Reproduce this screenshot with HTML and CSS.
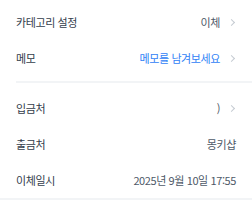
FILE: index.html
```html
<!DOCTYPE html>
<html lang="ko">
<head>
<meta charset="utf-8">
<link rel="stylesheet" href="styles.css">
</head>
<body>
<div class="page">
  <div class="section">
    <div class="row"><span class="label">카테고리 설정</span><span class="value">이체<span class="chev"></span></span></div>
    <div class="row"><span class="label">메모</span><span class="value blue">메모를 남겨보세요<span class="chev"></span></span></div>
  </div>
  <div class="divider"></div>
  <div class="section">
    <div class="row"><span class="label">입금처</span><span class="value">)<span class="chev"></span></span></div>
    <div class="row"><span class="label">출금처</span><span class="value">몽키샵</span></div>
    <div class="row"><span class="label">이체일시</span><span class="value">2025년 9월 10일 17:55</span></div>
  </div>
  <div class="bottom"></div>
</div>
</body>
</html>
```
FILE: styles.css
```css
html, body {
  margin: 0;
  padding: 0;
  background: #ffffff;
}
.page {
  width: 252px;
  height: 200px;
  display: flex;
  flex-direction: column;
  padding-top: 4px;
  box-sizing: border-box;
  font-family: "Noto Sans CJK KR", "Noto Sans", sans-serif;
  font-size: 11px;
  letter-spacing: -0.4px;
}
.section {
  display: flex;
  flex-direction: column;
}
.row {
  height: 36px;
  display: flex;
  align-items: center;
  justify-content: space-between;
  padding: 0 16px;
}
.label {
  color: #333d4b;
}
.value {
  color: #4e5968;
  display: flex;
  align-items: center;
}
.value.blue {
  color: #3182f6;
}
.chev {
  width: 4px;
  height: 4px;
  border-top: 1px solid #c5cbd2;
  border-right: 1px solid #c5cbd2;
  transform: rotate(45deg);
  margin-left: 9px;
  margin-right: 2px;
}
.divider {
  height: 2px;
  background: #f2f4f6;
  margin: 5px 0 7px 16px;
}
.bottom {
  height: 2px;
  background: #f2f4f6;
  margin-top: auto;
}
```
